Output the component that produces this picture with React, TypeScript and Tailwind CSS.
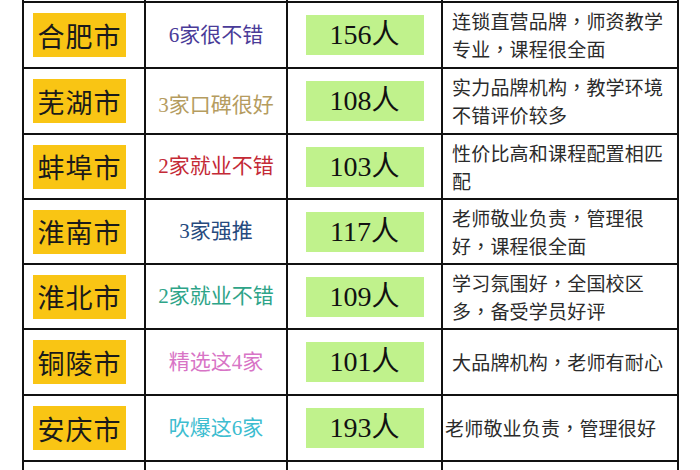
const rows = [
  {
    city: '合肥市',
    pick: '6家很不错',
    pickColor: 'text-[#4a3b98]',
    count: '156',
    h: 'h-[66px]',
    desc: [['连锁直营品牌', '师资教学'], ['专业', '课程很全面']],
    pad: 'pl-[9px]',
  },
  {
    city: '芜湖市',
    pick: '3家口碑很好',
    pickColor: 'text-[#b59c5f] pt-2',
    count: '108',
    h: 'h-[66px]',
    desc: [['实力品牌机构', '教学环境'], ['不错评价较多']],
    pad: 'pl-[9px]',
  },
  {
    city: '蚌埠市',
    pick: '2家就业不错',
    pickColor: 'text-[#c42a36]',
    count: '103',
    h: 'h-[65px]',
    desc: [['性价比高和课程配置相匹'], ['配']],
    pad: 'pl-[9px]',
  },
  {
    city: '淮南市',
    pick: '3家强推',
    pickColor: 'text-[#264a7e]',
    count: '117',
    h: 'h-[65px]',
    desc: [['老师敬业负责', '管理很'], ['好', '课程很全面']],
    pad: 'pl-[9px]',
  },
  {
    city: '淮北市',
    pick: '2家就业不错',
    pickColor: 'text-[#2ea488]',
    count: '109',
    h: 'h-[65px]',
    desc: [['学习氛围好', '全国校区'], ['多', '备受学员好评']],
    pad: 'pl-[9px]',
  },
  {
    city: '铜陵市',
    pick: '精选这4家',
    pickColor: 'text-[#d874c6]',
    count: '101',
    h: 'h-[66px]',
    desc: [['大品牌机构', '老师有耐心']],
    pad: 'pl-[9px]',
  },
  {
    city: '安庆市',
    pick: '吹爆这6家',
    pickColor: 'text-[#3dbdd0]',
    count: '193',
    h: 'h-[66px]',
    desc: [['老师敬业负责', '管理很好']],
    pad: 'pl-[2px]',
  },
]

const cols = 'grid grid-cols-[122px_142px_155px_1fr]'
const cell = 'border-r-2 border-[#111]'

function Line({ parts }: { parts: string[] }) {
  return (
    <div className="whitespace-nowrap">
      {parts.map((p, i) => (
        <span key={i}>
          {i > 0 && <span style={{ fontFamily: '"Noto Sans CJK TC", sans-serif' }}>，</span>}
          {p}
        </span>
      ))}
    </div>
  )
}

function Stub({ h }: { h: string }) {
  return (
    <div className={`${cols} ${h}`}>
      <div className={cell} />
      <div className={cell} />
      <div className={cell} />
      <div />
    </div>
  )
}

export default function App() {
  return (
    <div className="w-[700px] h-[470px] overflow-hidden bg-white">
      <div className="ml-[22px] w-[657px] border-x-2 border-[#111]">
        <Stub h="h-[1px]" />
        {rows.map((r) => (
          <div key={r.city} className={`${cols} ${r.h} border-t-2 border-[#111]`}>
            <div className={`${cell} flex items-center pl-[9px]`}>
              <div
                className="w-[93px] h-[44px] bg-[#f9c514] flex items-center justify-center text-[27px] text-[#1a1a1a] leading-none tracking-[1px]"
                style={{ fontFamily: '"Noto Sans CJK SC", sans-serif' }}
              >
                {r.city}
              </div>
            </div>
            <div
              className={`${cell} flex items-center justify-center text-[21px] leading-none ${r.pickColor}`}
              style={{ fontFamily: '"Liberation Serif", "Noto Sans CJK SC", serif' }}
            >
              {r.pick}
            </div>
            <div className={`${cell} flex items-center justify-center`}>
              <div
                className="w-[118px] h-[40px] bg-[#c0f28c] flex items-center justify-center text-[28px] text-[#111] leading-none"
                style={{ fontFamily: '"Liberation Serif", "Noto Sans CJK SC", serif' }}
              >
                {r.count}人
              </div>
            </div>
            <div
              className={`flex flex-col justify-center ${r.pad} text-[19px] leading-[28px] tracking-[0.2px] text-[#2b2b2b]`}
              style={{ fontFamily: '"Noto Sans CJK SC", sans-serif' }}
            >
              {r.desc.map((l, i) => (
                <Line key={i} parts={l} />
              ))}
            </div>
          </div>
        ))}
        <div className="border-t-2 border-[#111]">
          <Stub h="h-[20px]" />
        </div>
      </div>
    </div>
  )
}
